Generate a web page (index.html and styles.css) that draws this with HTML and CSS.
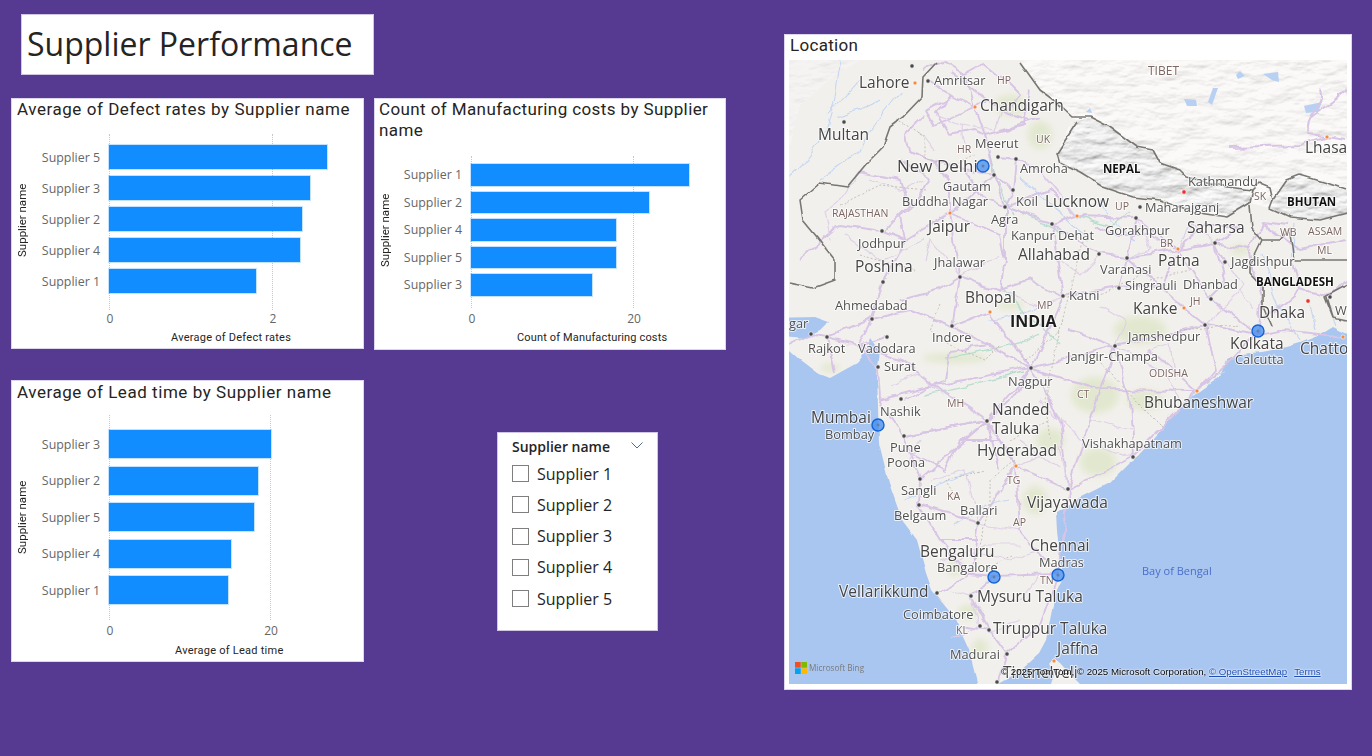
FILE: index.html
```html
<!DOCTYPE html>
<html lang="en">
<head>
<meta charset="utf-8">
<title>Supplier Performance</title>
<link rel="stylesheet" href="styles.css">
</head>
<body>
<main class="page">
  <section class="left">
    <header class="title-card"><h1>Supplier Performance</h1></header>

    <div class="row-top">
      <article class="chart chart--defect">
        <h2 class="chart-title">Average of Defect rates by Supplier name</h2>
        <div class="plot-area">
          <div class="y-title">Supplier name</div>
          <div class="plot">
            <div class="grid-line" style="left:77px"><span class="tick">0</span></div>
            <div class="grid-line" style="left:240px"><span class="tick">2</span></div>
            <div class="bar-row"><span class="cat">Supplier 5</span><span class="bar" style="width:218px"></span></div>
            <div class="bar-row"><span class="cat">Supplier 3</span><span class="bar" style="width:201px"></span></div>
            <div class="bar-row"><span class="cat">Supplier 2</span><span class="bar" style="width:193px"></span></div>
            <div class="bar-row"><span class="cat">Supplier 4</span><span class="bar" style="width:191px"></span></div>
            <div class="bar-row"><span class="cat">Supplier 1</span><span class="bar" style="width:147px"></span></div>
          </div>
        </div>
        <div class="axis-title">Average of Defect rates</div>
      </article>

      <article class="chart chart--cost">
        <h2 class="chart-title">Count of Manufacturing costs by Supplier name</h2>
        <div class="plot-area">
          <div class="y-title">Supplier name</div>
          <div class="plot">
            <div class="grid-line" style="left:77px"><span class="tick">0</span></div>
            <div class="grid-line" style="left:239px"><span class="tick">20</span></div>
            <div class="bar-row"><span class="cat">Supplier 1</span><span class="bar" style="width:218px"></span></div>
            <div class="bar-row"><span class="cat">Supplier 2</span><span class="bar" style="width:178px"></span></div>
            <div class="bar-row"><span class="cat">Supplier 4</span><span class="bar" style="width:145px"></span></div>
            <div class="bar-row"><span class="cat">Supplier 5</span><span class="bar" style="width:145px"></span></div>
            <div class="bar-row"><span class="cat">Supplier 3</span><span class="bar" style="width:121px"></span></div>
          </div>
        </div>
        <div class="axis-title">Count of Manufacturing costs</div>
      </article>
    </div>

    <div class="row-bottom">
      <article class="chart chart--lead">
        <h2 class="chart-title">Average of Lead time by Supplier name</h2>
        <div class="plot-area">
          <div class="y-title">Supplier name</div>
          <div class="plot">
            <div class="grid-line" style="left:77px"><span class="tick">0</span></div>
            <div class="grid-line" style="left:238px"><span class="tick">20</span></div>
            <div class="bar-row"><span class="cat">Supplier 3</span><span class="bar" style="width:162px"></span></div>
            <div class="bar-row"><span class="cat">Supplier 2</span><span class="bar" style="width:149px"></span></div>
            <div class="bar-row"><span class="cat">Supplier 5</span><span class="bar" style="width:145px"></span></div>
            <div class="bar-row"><span class="cat">Supplier 4</span><span class="bar" style="width:122px"></span></div>
            <div class="bar-row"><span class="cat">Supplier 1</span><span class="bar" style="width:119px"></span></div>
          </div>
        </div>
        <div class="axis-title">Average of Lead time</div>
      </article>

      <aside class="slicer">
        <div class="slicer-head">
          <span>Supplier name</span>
          <svg class="chevron" viewBox="0 0 12 7" width="12" height="7"><path d="M0.5 0.5 L6 6 L11.5 0.5"/></svg>
        </div>
        <label class="slicer-row"><span class="box"></span><span>Supplier 1</span></label>
        <label class="slicer-row"><span class="box"></span><span>Supplier 2</span></label>
        <label class="slicer-row"><span class="box"></span><span>Supplier 3</span></label>
        <label class="slicer-row"><span class="box"></span><span>Supplier 4</span></label>
        <label class="slicer-row"><span class="box"></span><span>Supplier 5</span></label>
      </aside>
    </div>
  </section>

  <section class="map-card">
    <h2 class="map-title">Location</h2>
    <div class="map">
      <svg class="map-svg" viewBox="789 60 558 624" width="558" height="624" xmlns="http://www.w3.org/2000/svg">
        <defs>
          <filter id="hill" x="0" y="0" width="100%" height="100%">
            <feTurbulence type="fractalNoise" baseFrequency="0.04 0.09" numOctaves="5" seed="11" result="n"/>
            <feDiffuseLighting in="n" surfaceScale="1.8" diffuseConstant="1.12" lighting-color="#ffffff">
              <feDistantLight azimuth="250" elevation="58"/>
            </feDiffuseLighting>
          </filter>
          <filter id="hill-deep" x="0" y="0" width="100%" height="100%">
            <feTurbulence type="fractalNoise" baseFrequency="0.04 0.09" numOctaves="5" seed="4" result="n"/>
            <feDiffuseLighting in="n" surfaceScale="2.8" diffuseConstant="1" lighting-color="#ffffff">
              <feDistantLight azimuth="250" elevation="54"/>
            </feDiffuseLighting>
          </filter>
          <filter id="soft"><feGaussianBlur stdDeviation="3"/></filter>
          <filter id="wobble" x="-5%" y="-5%" width="110%" height="110%">
            <feTurbulence type="fractalNoise" baseFrequency="0.05" numOctaves="3" seed="3" result="w"/>
            <feDisplacementMap in="SourceGraphic" in2="w" scale="9" xChannelSelector="R" yChannelSelector="G"/>
          </filter>
          <filter id="wobble-soft" x="-5%" y="-5%" width="110%" height="110%">
            <feTurbulence type="fractalNoise" baseFrequency="0.06" numOctaves="2" seed="9" result="w"/>
            <feDisplacementMap in="SourceGraphic" in2="w" scale="4" xChannelSelector="R" yChannelSelector="G"/>
          </filter>
          <clipPath id="himalaya">
            <path d="M1020 60 L1040 90 L1073 117 L1057 153 L1060 163 L1080 173 L1103 187 L1133 197 L1160 200 L1193 212 L1227 217 L1250 203 L1270 208 L1290 217 L1320 220 L1347 213 L1347 60 Z"/>
          </clipPath>
          <clipPath id="nepal">
            <path d="M1077 122 L1090 117 L1110 127 L1137 147 L1153 150 L1160 163 L1180 170 L1187 177 L1227 187 L1250 190 L1250 203 L1227 217 L1193 212 L1160 200 L1133 197 L1103 187 L1080 173 L1060 163 L1057 153 Z"/>
          </clipPath>
          <clipPath id="bhutan">
            <path d="M1273 200 L1287 180 L1300 175 L1327 183 L1347 190 L1347 213 L1320 220 L1290 217 L1270 208 Z"/>
          </clipPath>
          <clipPath id="pak">
            <path d="M789 60 L860 60 L835 75 L800 105 L789 150 Z"/>
          </clipPath>
        </defs>

        <rect class="land" x="789" y="60" width="558" height="624"/>

        <g clip-path="url(#himalaya)">
          <rect class="hillshade" x="1010" y="60" width="340" height="165" filter="url(#hill)"/>
        </g>
        <g clip-path="url(#nepal)">
          <rect class="hillshade-deep" x="1050" y="110" width="210" height="110" filter="url(#hill-deep)"/>
        </g>
        <g clip-path="url(#bhutan)">
          <rect class="hillshade-deep" x="1265" y="170" width="85" height="55" filter="url(#hill-deep)"/>
        </g>
        <g clip-path="url(#pak)">
          <rect class="hillshade-faint" x="789" y="60" width="100" height="95" filter="url(#hill)"/>
        </g>

        <g class="veg" filter="url(#soft)">
          <ellipse cx="1010" cy="105" rx="16" ry="10"/><ellipse cx="1040" cy="135" rx="12" ry="14"/>
          <ellipse cx="1140" cy="330" rx="26" ry="14"/><ellipse cx="1095" cy="395" rx="24" ry="18"/>
          <ellipse cx="1145" cy="400" rx="18" ry="10"/><ellipse cx="955" cy="358" rx="32" ry="5"/>
          <ellipse cx="1035" cy="500" rx="12" ry="14"/><ellipse cx="1098" cy="462" rx="18" ry="14"/>
          <ellipse cx="1050" cy="440" rx="14" ry="12"/><ellipse cx="830" cy="368" rx="10" ry="4"/>
          <ellipse cx="955" cy="568" rx="9" ry="7"/><ellipse cx="968" cy="612" rx="10" ry="7"/>
          <ellipse cx="980" cy="648" rx="8" ry="9"/><ellipse cx="1010" cy="305" rx="14" ry="4"/>
          <ellipse cx="1240" cy="250" rx="10" ry="5"/>
        </g>

        <g class="sea" filter="url(#wobble-soft)">
          <path d="M770 340 L789 350 L800 360 L817 373 L830 378 L857 363 L866 352 L870 338 L880 352 L877 373 L878 407 L879 443 L889 483 L902 520 L917 540 L926 573 L932 590 L954 617 L969 650 L976 677 L981 710 L770 710 Z"/>
          <path d="M996 710 L998 684 L1017 673 L1039 653 L1046 640 L1050 620 L1056 590 L1063 575 L1060 560 L1057 530 L1056 512 L1075 500 L1109 483 L1129 463 L1137 457 L1170 420 L1183 403 L1220 377 L1227 360 L1240 354 L1262 352 L1287 347 L1300 343 L1320 335 L1333 327 L1370 345 L1370 710 Z"/>
          <path d="M770 318 L815 317 L829 322 L820 331 L805 338 L770 335 Z"/>
        </g>
        <path class="land" d="M1054 658 L1060 663 L1068 672 L1080 684 L1051 684 L1055 672 L1049 664 Z"/>

        <g class="water" filter="url(#wobble)">
          <path d="M840 60 C835 85 835 105 825 130 C815 150 805 165 789 178"/>
          <path d="M860 80 C850 95 835 105 825 115 M880 100 C865 110 850 115 835 118 M900 92 C885 115 870 125 860 150 C850 160 835 170 820 180"/>
          <path d="M1020 178 C1040 195 1060 215 1085 235 M1100 200 C1110 220 1120 230 1135 240"/>
          <path d="M1296 225 L1293 260 M1262 255 L1275 300 L1300 340 M1310 305 L1316 330 M1325 300 L1335 325"/>
          <path d="M905 500 C925 490 950 480 975 470 M1010 500 L985 505 L955 525"/>
          <path d="M990 320 C1005 320 1020 312 1040 305"/>
          <path d="M1190 400 L1215 375 L1225 372"/>
        </g>
        <path class="water-fill" d="M1184 99 L1196 100 L1197 106 L1187 106 Z M1213 88 L1218 88 L1212 105 L1208 102 Z M1236 75 L1240 71 L1245 76 L1238 79 Z M1263 74 L1278 72 L1279 82 L1272 80 Z M1304 106 L1322 102 L1318 112 L1306 113 Z M1090 108 L1092 113 L1086 112 Z"/>

        <g class="green-road" filter="url(#wobble)">
          <path d="M945 358 C985 350 1020 345 1040 335 M1000 285 C1020 310 1040 322 1060 345 M925 395 C960 390 990 380 1025 372"/>
          <path d="M1000 205 C1030 215 1060 235 1090 240 M1130 212 L1110 225 L1078 217 M985 135 L995 175 L1012 215"/>
        </g>

        <g class="road" filter="url(#wobble)">
          <path d="M928 81 L952 96 L975 107 L985 135 L994 175 L1005 207 L1052 224 L1077 216 L1136 218 L1178 249 L1215 243 L1250 250 L1262 222 L1290 225"/>
          <path d="M975 107 L935 125 L926 110 L952 96 M925 115 L905 135 L908 150 L935 160 L965 170 L994 175"/>
          <path d="M994 175 L950 213 L905 240 L882 282 L872 319 L858 345 L878 367 L880 400 L904 436 L920 479 L919 505 L940 540 L970 575 L994 577 L1058 575"/>
          <path d="M950 213 L960 277 L952 326 L990 312 L1031 368 L987 421 L1016 466 L1068 489 L1133 457 L1197 391 L1258 335 L1262 300 L1250 250"/>
          <path d="M872 319 L911 310 L952 326 L1031 368 L1115 346 L1205 325 L1258 335 M1031 368 L1063 297 L1052 224"/>
          <path d="M1016 466 L987 421 L904 436 M1016 466 L978 523 L970 575 M1016 466 L1020 530 L1058 575 M1068 489 L1058 575"/>
          <path d="M994 577 L971 596 L989 630 L1007 654 L997 684 M970 575 L937 593 M989 630 L960 626 M1058 575 L1040 625 L1007 654"/>
          <path d="M1005 207 L1005 260 L1000 290 M1052 224 L1099 254 L1127 258 L1178 249 M1127 258 L1119 288 L1063 297 M1178 249 L1211 299 L1258 335 M1127 258 L1184 308 L1205 325"/>
          <path d="M1005 207 L1050 190 L1077 216 M998 157 L1016 159 L1013 190 L1005 207 M1000 130 L1040 118 M985 135 L1025 125 L1030 90 M950 72 L985 100 L975 107"/>
          <path d="M882 231 L840 225 L800 260 M882 231 L905 240 M860 172 L900 180 L908 205 L882 231 M950 213 L1000 235 L1005 260"/>
          <path d="M811 334 L827 337 L872 319 M789 345 L811 334 M827 337 L858 345 L887 337 M827 337 L835 372"/>
          <path d="M904 436 L987 421 M1031 368 L1100 390 L1197 391 M1133 457 L1130 400 L1115 346 M1225 262 L1215 243 L1240 225 M1262 222 L1300 250 L1347 240"/>
          <path d="M919 505 L978 523 M920 479 L987 421 M940 540 L978 540 M900 450 L945 470 L960 440 L1000 440"/>
          <path d="M1320 90 C1330 105 1300 115 1310 135 L1347 140 M1230 148 L1300 146 L1327 137 M1347 90 C1335 100 1320 110 1310 118"/>
          <path d="M1265 320 L1300 290 L1330 297 L1347 280 M1258 335 L1285 330 L1343 337 M1300 290 L1292 260"/>
          <path d="M900 300 L940 290 L960 277 L1000 290 M858 345 L900 360 L935 385 L1031 368 M880 400 L935 385 L987 421"/>
          <path d="M1070 330 L1115 346 L1100 390 L1068 489 M1150 350 L1197 391 M1205 325 L1215 370 L1197 391"/>
          <path d="M925 70 L945 62 L965 75 L985 64 L1005 80 L1020 95 L1005 112 L985 100 M950 96 L935 112 L950 135 L975 130 L985 135 M965 75 L975 107 M1005 112 L1030 120"/>
          <path d="M900 160 L930 178 L918 200 L900 215 L905 240 M935 160 L950 185 L950 213 M965 170 L985 200 L1005 207 M1016 159 L1040 170 L1060 195 M994 175 L1013 190"/>
          <path d="M1095 225 L1120 235 L1150 235 L1178 249 L1205 225 L1240 225 M1178 249 L1165 285 L1119 288 M1215 243 L1225 285 L1211 299 M1136 218 L1127 258"/>
          <path d="M905 400 L945 380 L950 350 L990 345 M1000 290 L1030 280 L1063 297 M1031 368 L1010 400 L987 421 M1031 368 L1060 420 L1068 489 M987 421 L1000 470"/>
        </g>
        <g class="road-thin" filter="url(#wobble)">
          <path d="M935 115 L960 125 L995 130 L1005 100 M960 125 L965 150 M935 150 L920 130 M1040 170 L1060 195 L1077 216 M1136 218 L1150 250 L1127 258 M1178 249 L1190 225 L1215 243"/>
          <path d="M860 172 L845 195 L825 210 L830 240 M925 260 L930 240 L960 277 L1000 255 M1000 290 L1040 305 L1063 297 M1100 305 L1125 320 L1115 346 M1225 262 L1245 285 L1205 325"/>
          <path d="M1180 400 L1160 370 L1115 346 M1040 400 L1080 440 L1133 457 M1016 466 L1060 445 L1068 489 M930 480 L965 470 L978 523 L1020 530 M940 560 L970 550 L1010 560 L1040 550"/>
          <path d="M820 355 L835 345 L858 345 M890 385 L920 375 L945 395 M905 470 L920 440 M950 590 L971 596 L980 626 L950 640 M990 630 L1020 620"/>
          <path d="M870 180 L900 190 L925 180 M845 235 L880 260 L925 240 M1045 250 L1080 275 L1099 254 M1130 360 L1170 345 L1175 380 M1020 440 L1060 470 M1090 420 L1130 430 M1240 290 L1255 310 M1020 600 L1040 575 M960 560 L985 545 L1020 545"/>
        </g>
        <g class="dash" filter="url(#wobble-soft)">
          <path d="M896 120 L925 135 L925 160 L955 165 L975 155 M840 205 L880 185 L925 190 M860 255 L915 270 M940 305 L930 330 L950 345 L985 360 L1000 345 M1085 230 L1060 330 L1045 400 L1050 440 M1098 360 L1140 405 L1165 430"/>
          <path d="M1015 460 L990 480 L990 505 L975 560 M1012 555 L985 570 M955 495 L945 480 L985 470 M1010 440 L1050 420 M1090 300 L1150 270 M1180 330 L1240 325 M1150 280 L1190 270 M1025 360 L1060 330"/>
        </g>

        <g class="border" filter="url(#wobble-soft)">
          <path d="M937 62 L923 77 L922 97 L903 117 L890 127 L883 147 L867 163 L847 187 L820 183 L800 200 L803 220 L817 237 L827 250 L835 260 L835 280 L813 288 L789 283"/>
          <path d="M1020 62 L1040 90 L1060 105 L1073 117 L1090 117 L1110 127 L1137 147 L1153 150 L1160 163 L1180 170 L1187 177 L1227 187 L1253 190 L1260 183 L1270 187 L1273 200 L1287 180 L1300 175 L1327 183 L1347 190"/>
          <path d="M1077 122 L1057 153 L1060 163 L1080 173 L1103 187 L1133 197 L1160 200 L1193 212 L1227 217 L1250 203 L1253 190"/>
          <path d="M1273 200 L1270 208 L1290 217 L1320 220 L1347 213"/>
          <path d="M1250 205 L1252 228 L1262 240 L1280 240 L1290 228 L1295 260 L1347 260 M1262 240 L1250 265 L1250 273 L1263 287 L1263 307 L1272 327 M1327 297 L1333 317 L1347 320 M1333 317 L1325 297 L1347 285"/>
        </g>

        <g class="dots">
          <circle cx="912" cy="66" r="2.2"/><circle cx="928" cy="81" r="2.2"/><circle cx="844" cy="122" r="2.2"/><circle cx="998" cy="157" r="2.2"/><circle cx="1016" cy="159" r="2.2"/><circle cx="994" cy="175" r="2.2"/><circle cx="1013" cy="190" r="2.2"/><circle cx="1005" cy="207" r="2.2"/><circle cx="1052" cy="224" r="2.2"/><circle cx="882" cy="231" r="2.2"/><circle cx="1140" cy="207" r="2.2"/><circle cx="1136" cy="218" r="2.2"/><circle cx="1099" cy="254" r="2.2"/><circle cx="1127" cy="258" r="2.2"/><circle cx="1215" cy="243" r="2.2"/><circle cx="1225" cy="262" r="2.2"/><circle cx="1119" cy="288" r="2.2"/><circle cx="1063" cy="296" r="2.2"/><circle cx="1211" cy="299" r="2.2"/><circle cx="1205" cy="325" r="2.2"/><circle cx="1115" cy="346" r="2.2"/><circle cx="1330" cy="297" r="2.2"/><circle cx="1133" cy="457" r="2.2"/><circle cx="883" cy="282" r="2.2"/><circle cx="960" cy="277" r="2.2"/><circle cx="872" cy="319" r="2.2"/><circle cx="952" cy="326" r="2.2"/><circle cx="811" cy="334" r="2.2"/><circle cx="827" cy="337" r="2.2"/><circle cx="887" cy="337" r="2.2"/><circle cx="878" cy="367" r="2.2"/><circle cx="1031" cy="368" r="2.2"/><circle cx="901" cy="399" r="2.2"/><circle cx="904" cy="436" r="2.2"/><circle cx="987" cy="421" r="2.2"/><circle cx="920" cy="479" r="2.2"/><circle cx="919" cy="505" r="2.2"/><circle cx="978" cy="523" r="2.2"/><circle cx="1068" cy="489" r="2.2"/><circle cx="937" cy="593" r="2.2"/><circle cx="971" cy="596" r="2.2"/><circle cx="980" cy="626" r="2.2"/><circle cx="989" cy="630" r="2.2"/><circle cx="1007" cy="654" r="2.2"/><circle cx="997" cy="682" r="2.2"/>
        </g>
        <g class="dots-orange">
          <circle cx="915" cy="83" r="2"/><circle cx="975" cy="107" r="2"/><circle cx="950" cy="213" r="2"/><circle cx="1077" cy="216" r="2"/><circle cx="1178" cy="249" r="2"/><circle cx="1184" cy="308" r="2"/><circle cx="1197" cy="391" r="2"/><circle cx="1343" cy="337" r="2"/><circle cx="990" cy="312" r="2"/><circle cx="1016" cy="466" r="2"/><circle cx="1327" cy="137" r="2"/><circle cx="1054" cy="661" r="2"/>
        </g>
        <g class="dots-red"><circle cx="1184" cy="192" r="2.2"/><circle cx="1308" cy="301" r="2.2"/></g>

        <g class="lbl lbl-big">
          <text x="859" y="88">Lahore</text><text x="980" y="111">Chandigarh</text><text x="818" y="140">Multan</text><text class="lbl-delhi" x="897" y="172">New Delhi</text><text x="1045" y="207">Lucknow</text><text x="928" y="232">Jaipur</text><text x="1018" y="260">Allahabad</text><text x="965" y="303">Bhopal</text><text x="1158" y="266">Patna</text><text x="1187" y="233">Saharsa</text><text x="855" y="272">Poshina</text><text x="1133" y="314">Kanke</text><text x="1259" y="318">Dhaka</text><text x="1230" y="349">Kolkata</text><text x="1300" y="354">Chatto</text><text x="811" y="423">Mumbai</text><text x="992" y="415">Nanded</text><text x="992" y="434">Taluka</text><text x="977" y="456">Hyderabad</text><text x="1144" y="408">Bhubaneshwar</text><text x="1027" y="508">Vijayawada</text><text x="1030" y="551">Chennai</text><text x="920" y="557">Bengaluru</text><text x="839" y="597">Vellarikkund</text><text x="977" y="602">Mysuru Taluka</text><text x="993" y="634">Tiruppur Taluka</text><text x="1057" y="654">Jaffna</text><text x="1305" y="153">Lhasa</text><text x="1003" y="678">Tirunelveli</text>
        </g>
        <g class="lbl lbl-small">
          <text x="934" y="85">Amritsar</text><text x="975" y="148">Meerut</text><text x="1020" y="173">Amroha</text><text x="943" y="191">Gautam</text><text x="902" y="206">Buddha Nagar</text><text x="991" y="224">Agra</text><text x="1016" y="206">Koil</text><text x="858" y="248">Jodhpur</text><text x="1011" y="240">Kanpur Dehat</text><text x="934" y="267">Jhalawar</text><text x="835" y="310">Ahmedabad</text><text x="932" y="342">Indore</text><text x="808" y="353">Rajkot</text><text x="858" y="353">Vadodara</text><text x="884" y="371">Surat</text><text x="880" y="416">Nashik</text><text x="825" y="439">Bombay</text><text x="890" y="452">Pune</text><text x="887" y="467">Poona</text><text x="1008" y="386">Nagpur</text><text x="901" y="495">Sangli</text><text x="894" y="520">Belgaum</text><text x="960" y="515">Ballari</text><text x="937" y="572">Bangalore</text><text x="1039" y="567">Madras</text><text x="903" y="619">Coimbatore</text><text x="950" y="659">Madurai</text><text x="1188" y="186">Kathmandu</text><text x="1145" y="212">Maharajganj</text><text x="1105" y="235">Gorakhpur</text><text x="1100" y="274">Varanasi</text><text x="1125" y="290">Singrauli</text><text x="1183" y="289">Dhanbad</text><text x="1231" y="266">Jagdishpur</text><text x="1069" y="300">Katni</text><text x="1128" y="341">Jamshedpur</text><text x="1067" y="361">Janjgir-Champa</text><text x="1235" y="364">Calcutta</text><text x="1082" y="448">Vishakhapatnam</text><text x="789" y="328">gar</text><text x="1335" y="315">W</text>
        </g>
        <g class="lbl lbl-state">
          <text class="lbl-tibet" x="1148" y="75">TIBET</text><text x="997" y="84">HP</text><text x="1036" y="143">UK</text><text x="957" y="153">HR</text><text x="832" y="217">RAJASTHAN</text><text x="1115" y="210">UP</text><text x="1254" y="200">SK</text><text x="1280" y="236">WB</text><text x="1308" y="235">ASSAM</text><text x="1160" y="247">BR</text><text x="1190" y="305">JH</text><text x="1037" y="309">MP</text><text x="947" y="407">MH</text><text x="1077" y="398">CT</text><text x="1149" y="377">ODISHA</text><text x="1007" y="484">TG</text><text x="947" y="500">KA</text><text x="1013" y="526">AP</text><text x="956" y="634">KL</text><text x="1040" y="584">TN</text><text x="1317" y="254">ML</text>
        </g>
        <g class="lbl lbl-country">
          <text x="1103" y="173">NEPAL</text><text x="1287" y="206">BHUTAN</text><text x="1256" y="286">BANGLADESH</text>
        </g>
        <text class="lbl lbl-india" x="1010" y="327">INDIA</text>
        <text class="lbl lbl-sea" x="1142" y="575">Bay of Bengal</text>

        <g class="marker">
          <circle cx="983" cy="166" r="6"/><circle cx="1258" cy="331" r="6"/><circle cx="878" cy="425" r="6"/><circle cx="994" cy="577" r="6"/><circle cx="1058" cy="575" r="6"/>
        </g>
        <g class="marker-core">
          <circle cx="983" cy="166" r="1.5"/><circle cx="1258" cy="331" r="1.5"/><circle cx="878" cy="425" r="1.5"/><circle cx="994" cy="577" r="1.5"/><circle cx="1058" cy="575" r="1.5"/>
        </g>
      </svg>

      <div class="bing">
        <svg class="bing-logo" viewBox="0 0 12 12" width="12" height="12">
          <rect class="ms-red" width="5.7" height="5.7"/><rect class="ms-green" x="6.3" width="5.7" height="5.7"/><rect class="ms-blue" y="6.3" width="5.7" height="5.7"/><rect class="ms-yellow" x="6.3" y="6.3" width="5.7" height="5.7"/>
        </svg>
        <span>Microsoft Bing</span>
      </div>
      <div class="attribution">© 2025 TomTom, © 2025 Microsoft Corporation, <a>© OpenStreetMap</a><a class="terms">Terms</a></div>
    </div>
  </section>
</main>
</body>
</html>
```

FILE: styles.css
```css
* { box-sizing: border-box; }

html, body { margin: 0; padding: 0; }

body {
  background: #563a92;
  font-family: "Open Sans", "Noto Sans", sans-serif;
  color: #252423;
}

.page {
  display: flex;
  width: 1372px;
  height: 756px;
  overflow: hidden;
}

.left {
  width: 784px;
  flex: none;
  padding: 14px 0 0 11px;
}

/* Page title */
.title-card {
  width: 353px;
  height: 61px;
  margin-left: 10px;
  padding: 0 0 2px 5px;
  background: #fff;
  border: 1px solid #cfc6e4;
  display: flex;
  align-items: center;
}

.title-card h1 {
  margin: 0;
  font-size: 32px;
  font-weight: 400;
  line-height: 1;
  color: #252423;
}

.row-top {
  display: flex;
  align-items: flex-start;
  gap: 10px;
  margin-top: 23px;
  height: 252px;
}

.row-bottom {
  display: flex;
  align-items: flex-start;
  margin-top: 30px;
}

/* Bar chart cards */
.chart {
  flex: none;
  background: #fff;
  border: 1px solid #dcd6ec;
  width: 353px;
}

.chart--defect {
  height: 251px;
  --title-h: 35px;
  --title-ls: 0.55px;
  --title-pl: 5px;
  --title-pt: 0px;
  --plot-h: 176px;
  --plot-pad: 11px;
  --row-h: 24px;
  --row-gap: 7px;
  --tick-top: 0px;
  --axis-top: 21px;
  --axis-left: 159px;
  --axis-ls: 0.25px;
  --y-w: 20px;
  --y-shift: 4px;
}

.chart--cost {
  width: 352px;
  height: 252px;
  --title-h: 57px;
  --title-ls: 0.4px;
  --title-pl: 4px;
  --title-pt: 0px;
  --plot-h: 152px;
  --plot-pad: 8px;
  --row-h: 21.5px;
  --row-gap: 6px;
  --tick-top: 2px;
  --axis-top: 23px;
  --axis-left: 142px;
  --axis-ls: 0.15px;
  --y-w: 19px;
  --y-shift: 4px;
}

.chart--lead {
  height: 282px;
  --title-h: 34px;
  --title-ls: 0.55px;
  --title-pl: 5px;
  --title-pt: 1px;
  --plot-h: 205px;
  --plot-pad: 15px;
  --row-h: 28px;
  --row-gap: 8.6px;
  --tick-top: 2px;
  --axis-top: 24px;
  --axis-left: 163px;
  --axis-ls: 0.25px;
  --y-w: 20px;
  --y-shift: 0px;
}

.chart-title {
  margin: 0;
  height: var(--title-h);
  padding: var(--title-pt) 4px 0 var(--title-pl);
  font-family: Roboto, "Noto Sans", sans-serif;
  font-size: 17px;
  font-weight: 400;
  line-height: 21px;
  letter-spacing: var(--title-ls);
  color: #252423;
}

.plot-area {
  display: flex;
  height: var(--plot-h);
}

.y-title {
  flex: none;
  width: var(--y-w);
  padding-top: var(--y-shift);
  writing-mode: vertical-rl;
  transform: rotate(180deg);
  text-align: center;
  font-family: Roboto, "Noto Sans", sans-serif;
  font-size: 11.5px;
  line-height: 20px;
  color: #252423;
}

.plot {
  position: relative;
  flex: 1;
  padding-top: var(--plot-pad);
  display: flex;
  flex-direction: column;
  gap: var(--row-gap);
}

.grid-line {
  position: absolute;
  top: 0;
  bottom: 0;
  width: 0;
  border-left: 1px dotted #c8c8c8;
}

.tick {
  position: absolute;
  top: 100%;
  left: 0;
  margin-top: var(--tick-top);
  transform: translateX(-50%);
  font-size: 12px;
  line-height: 18px;
  color: #666666;
}

.bar-row {
  position: relative;
  display: flex;
  align-items: center;
  height: var(--row-h);
}

.cat {
  flex: none;
  width: 68px;
  margin-right: 9px;
  padding-top: 1px;
  text-align: right;
  font-size: 12.4px;
  line-height: 16px;
  color: #666666;
  white-space: nowrap;
}

.bar {
  height: 100%;
  background: #118dff;
  box-shadow: 0 0 0 1px rgba(17, 141, 255, 0.25);
}

.axis-title {
  margin-top: var(--axis-top);
  margin-left: var(--axis-left);
  font-family: Roboto, "Noto Sans", sans-serif;
  font-size: 11px;
  line-height: 14px;
  letter-spacing: var(--axis-ls);
  color: #252423;
  white-space: nowrap;
}

/* Slicer */
.slicer {
  flex: none;
  width: 161px;
  height: 199px;
  margin: 52px 0 0 133px;
  padding: 4px 14px 0 14px;
  background: #fff;
  border: 1px solid #cfc6e4;
}

.slicer-head {
  display: flex;
  justify-content: space-between;
  align-items: flex-start;
  height: 21px;
  font-size: 14px;
  font-weight: 600;
  line-height: 20px;
  color: #252423;
}

.chevron {
  margin-top: 5px;
  fill: none;
  stroke: #5a6a80;
  stroke-width: 1;
}

.slicer-row {
  display: flex;
  align-items: center;
  gap: 8px;
  height: 31.25px;
  font-size: 16px;
  line-height: 20px;
  color: #252423;
}

.box {
  width: 17px;
  height: 17px;
  flex: none;
  border: 1px solid #7f7f7f;
  background: #fff;
}

/* Map card */
.map-card {
  flex: none;
  width: 568px;
  height: 656px;
  margin-top: 34px;
  padding: 0 4px;
  background: #fff;
  border: 1px solid #dcd6ec;
}

.map-title {
  margin: 0;
  height: 25px;
  padding-left: 1px;
  font-family: Roboto, "Noto Sans", sans-serif;
  font-size: 17px;
  font-weight: 400;
  line-height: 20px;
  letter-spacing: 0.3px;
  color: #252423;
}

.map {
  position: relative;
  width: 558px;
  height: 624px;
  overflow: hidden;
}

.map-svg { display: block; }

.land { fill: #f2f0ec; }
.sea path { fill: #a9c6f1; }
.hillshade { opacity: 0.65; }
.hillshade-deep { opacity: 0.8; }
.hillshade-faint { opacity: 0.3; }

.veg ellipse { fill: #d5e2b8; opacity: 0.55; }

.water path {
  fill: none;
  stroke: #c4d7f2;
  stroke-width: 1.1;
}
.water-fill { fill: #b8d0f2; }

.green-road path {
  fill: none;
  stroke: #b8dcd0;
  stroke-width: 1.3;
}

.road path {
  fill: none;
  stroke: #d8c5e5;
  stroke-width: 1.9;
  stroke-linejoin: round;
}
.road-thin path {
  fill: none;
  stroke: #dfd1e8;
  stroke-width: 1.2;
}
.dash path {
  fill: none;
  stroke: #b9b5ac;
  stroke-width: 0.8;
  stroke-dasharray: 2 2;
}

.border path {
  fill: none;
  stroke: #6b6965;
  stroke-width: 1.6;
  stroke-linejoin: round;
  opacity: 0.9;
}

.dots circle { fill: #4a4a4a; stroke: #fff; stroke-width: 0.7; }
.dots-orange circle { fill: #f58a3c; stroke: #fff; stroke-width: 0.6; }
.dots-red circle { fill: #e8332a; stroke: #fff; stroke-width: 0.6; }

.lbl text, .lbl-india, .lbl-sea {
  font-family: "Open Sans", "Noto Sans", sans-serif;
  paint-order: stroke;
  stroke: rgba(255, 255, 255, 0.75);
  stroke-width: 2px;
  stroke-linejoin: round;
}
.lbl-big text { font-size: 15.5px; fill: #444444; }
.lbl-big .lbl-delhi { font-size: 17px; }
.lbl-small text { font-size: 12.8px; fill: #505050; }
.lbl-state text { font-size: 10.5px; fill: #7b6661; }
.lbl-state .lbl-tibet { font-size: 12px; }
.lbl-country text { font-size: 11.5px; font-weight: 700; fill: #111111; }
.lbl-india { font-size: 16px; font-weight: 700; fill: #1e1e1e; }
.lbl-sea { font-size: 11px; fill: #4a6fc9; stroke: none; }

.marker circle {
  fill: rgba(55, 135, 240, 0.72);
  stroke: #1463d2;
  stroke-width: 1.4;
}
.marker-core circle { fill: #5f7fae; }

.bing {
  position: absolute;
  left: 6px;
  bottom: 10px;
  display: flex;
  align-items: center;
  gap: 2px;
  font-family: "Open Sans", sans-serif;
  font-size: 8.2px;
  line-height: 12px;
  color: #7a7a7a;
}
.ms-red { fill: #f25022; }
.ms-green { fill: #7fba00; }
.ms-blue { fill: #00a4ef; }
.ms-yellow { fill: #ffb900; }

.attribution {
  position: absolute;
  left: 212px;
  bottom: 6px;
  font-family: "Liberation Sans", Arial, sans-serif;
  font-size: 9.7px;
  line-height: 12px;
  white-space: nowrap;
  color: #000;
  text-shadow: 0 0 2px #fff, 0 0 2px #fff;
}
.attribution a {
  color: #1f4fb4;
  text-decoration: underline;
}
.attribution .terms { margin-left: 7px; }
```
